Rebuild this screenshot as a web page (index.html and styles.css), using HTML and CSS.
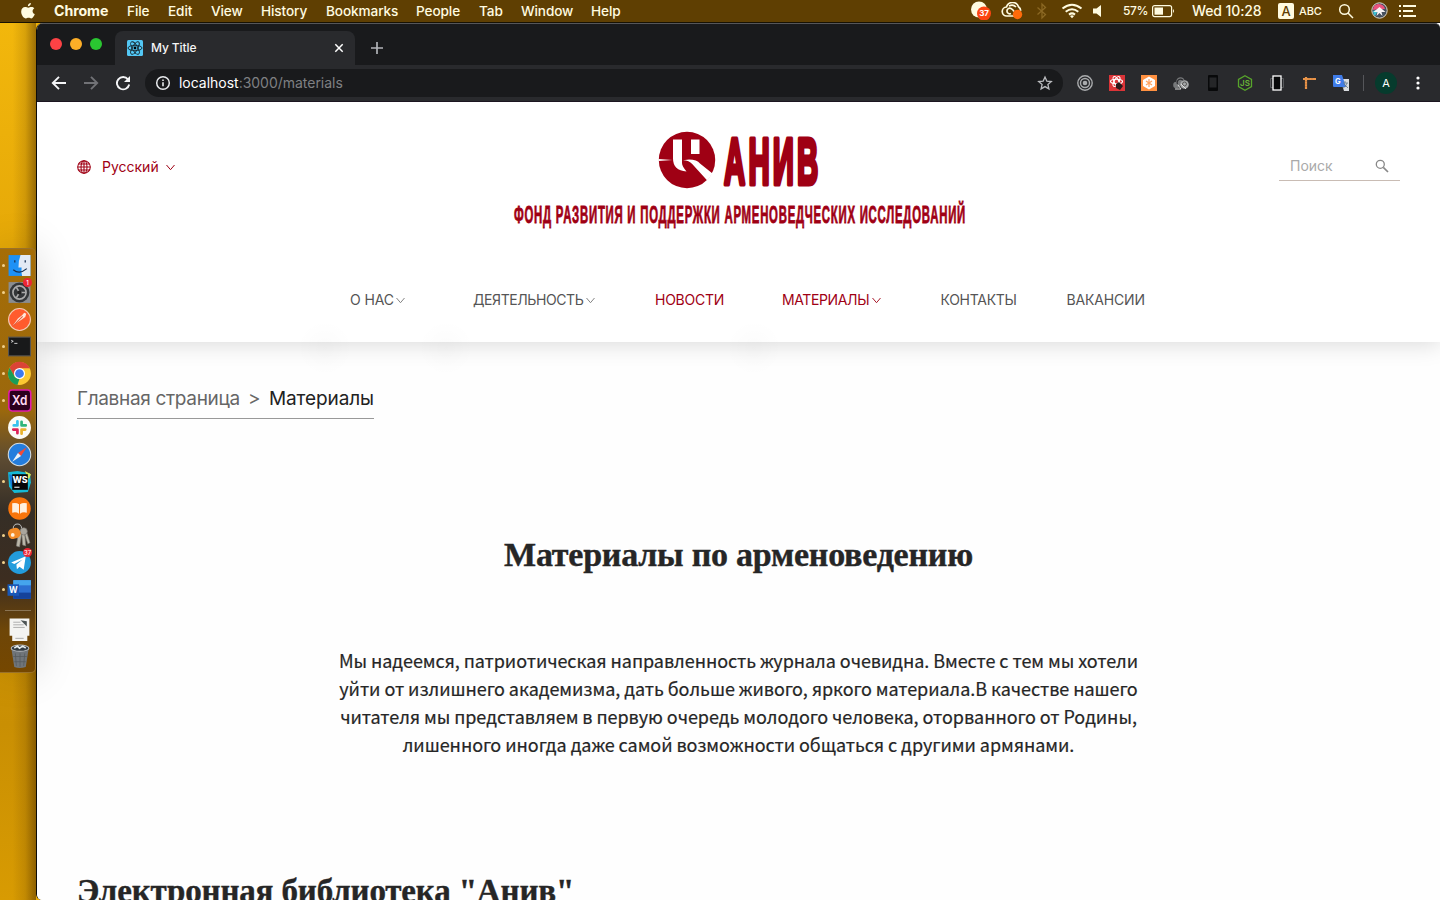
FILE: index.html
```html
<!DOCTYPE html>
<html lang="ru">
<head>
<meta charset="utf-8">
<title>My Title</title>
<link rel="stylesheet" href="styles.css">
</head>
<body>
<div class="desktop">
  <div class="menubar">
    <svg class="apple" width="16" height="18" viewBox="0 0 16 18"><path fill="#fffbe0" d="M10.9 1c.1 1.600-1.300 3.200-3 3.200C7.700 2.600 9.200 1.200 10.900 1zM14.300 6.200c-2.500 1.500-2.100 4.900.5 5.900-.6 1.900-2 4.300-3.500 4.300-1 0-1.500-.6-2.700-.6s-1.800.6-2.700.6C3.700 16.400 1 12.600 1.200 9.400 1.300 6.700 3 5 5.100 5c1.300 0 2.200.7 3.200.7S10.200 5 11.500 5c1.100 0 2.100.5 2.800 1.200z"/></svg>
    <b>Chrome</b><span>File</span><span>Edit</span><span>View</span><span>History</span><span>Bookmarks</span><span>People</span><span>Tab</span><span>Window</span><span>Help</span>
    <svg width="21" height="19" viewBox="0 0 21 19"><circle cx="8" cy="8.500" r="8" fill="#fffbe0"/><circle cx="13" cy="12.500" r="7" fill="#fc4512"/><text x="13" y="15.300" text-anchor="middle" font-size="8" font-weight="700" fill="#fff">37</text></svg>
    <svg width="22" height="18" viewBox="0 0 22 18"><g fill="none" stroke="#fffbe0" stroke-width="1.700"><path d="M14 14H6a4.500 4.500 0 0 1-.5-9 6.300 6.300 0 0 1 12-.2 5 5 0 0 1 2.200 4"/><path d="M10 11.500a2.800 2.800 0 1 1 0-5q2 1 3 3M8 4q4-2 7 1"/></g><circle cx="16.500" cy="12.500" r="4.700" fill="#ff6a0a"/></svg>
    <svg width="12" height="18" viewBox="0 0 12 18"><path d="M1.500 5.500l8 7L6 16V2l3.500 3.500-8 7" fill="none" stroke="#8b6823" stroke-width="1.300"/></svg>
    <svg width="22" height="16" viewBox="0 0 22 16"><g fill="none" stroke="#fffbe0" stroke-width="2"><path d="M1.500 5.500q9.500-7.500 19 0M4.700 8.700q6.300-5 12.600 0M8 11.600q3-2.400 6 0"/></g><path d="M9 13q2-1.500 4 0l-2 2.200z" fill="#fffbe0"/></svg>
    <svg width="12" height="14" viewBox="0 0 12 14"><path d="M1 4.500h3.500L9 1v12L4.500 9.500H1z" fill="#fffbe0"/></svg>
    <span class="pct">57%</span>
    <svg width="24" height="14" viewBox="0 0 24 14"><rect x=".6" y="1.600" width="19" height="11" rx="2" fill="none" stroke="#fffbe0" stroke-width="1.200"/><rect x="2.500" y="3.500" width="8.500" height="7.200" fill="#fffbe0"/><path d="M21 5q2 2 0 4z" fill="#fffbe0"/></svg>
    <span class="clock">Wed 10:28</span>
    <i class="layout">A</i><span class="abc">ABC</span>
    <svg width="16" height="16" viewBox="0 0 16 16"><g fill="none" stroke="#fffbe0" stroke-width="1.500"><circle cx="6.500" cy="6.500" r="4.800"/><path d="M10 10l5 5"/></g></svg>
    <svg width="17" height="17" viewBox="0 0 17 17"><circle cx="8.500" cy="8.500" r="7.700" fill="#46505e" stroke="#ded7ca"/><path d="M2 8Q2 3 7 2q6 0 7 5L9 7z" fill="#eb527c"/><path d="M2 9l6-2-4 7q-2-2-2-5z" fill="#3ec1d4"/><path d="M8.500 5l6 5q-3 0-4 0l1 4-3-3-3 3 1-4-4 0z" fill="#f6f3f5"/></svg>
    <svg width="20" height="14" viewBox="0 0 20 14"><path d="M1 2h2M5 2h13M1 7h2M5 7h10M1 12h2M5 12h13" stroke="#fffbe0" stroke-width="2"/></svg>
  </div>

  <div class="workspace">
    <aside class="side">
      <div class="dock">
        <div class="app run"><svg viewBox="0 0 24 24"><rect x="1.500" y="2" width="21" height="20" fill="#1e91f5"/><path d="M13 2h9.500v20h-8q-1-4-.5-8h-3q0-7 2-12z" fill="#e3eaf4"/><path d="M6 16q6 5 13-1" fill="none" stroke="#173154" stroke-width="1.200"/><path d="M7.500 7v2M17.500 7v2" stroke="#173154" stroke-width="1.200"/></svg></div>
        <div class="app run"><svg viewBox="0 0 24 24"><rect x="1.500" y="2" width="21" height="20" fill="#8a8d90"/><circle cx="12" cy="12" r="9.500" fill="#333638"/><circle cx="12" cy="12" r="6.300" fill="none" stroke="#aaa" stroke-width="1.600"/><path d="M12 12h6M12 12l-3-5M12 12l-3 5" stroke="#aaa" stroke-width="1.500"/><circle cx="12" cy="12" r="2" fill="#222"/></svg><em>1</em></div>
        <div class="app"><svg viewBox="0 0 24 24"><circle cx="12" cy="12" r="10.500" fill="#ff5b2d" stroke="#f3cdb6"/><path d="M5.500 18l5-7 4-3 2-2.500 2 1-1 3-4 3-3 2z" fill="#ffe6d9"/><path d="M6 18l9-9" stroke="#df5a38"/></svg></div>
        <div class="app run"><svg viewBox="0 0 24 24"><rect x="1.500" y="3" width="21" height="18" fill="#18191a" stroke="#555"/><path d="M4 6l2 1-2 1M7 9h3" fill="none" stroke="#eee" stroke-width=".8"/></svg></div>
        <div class="app run"><svg viewBox="0 0 24 24"><circle cx="12" cy="12" r="11" fill="#fbc932"/><path d="M2.500 6.500a11 11 0 0 1 19.500 0.500H12L7 14.500z" fill="#db4436"/><path d="M2.500 6.500L7.500 15l4.500 2-2 6A11 11 0 0 1 2.500 6.500z" fill="#199d58"/><circle cx="12" cy="12" r="5.300" fill="#fff"/><circle cx="12" cy="12" r="4.200" fill="#3d7af0"/></svg></div>
        <div class="app run"><svg viewBox="0 0 24 24"><rect x="1.800" y="2" width="21" height="20" rx="3" fill="#2b001d" stroke="#e31bab" stroke-width="1.500"/><text x="4.700" y="16.500" font-size="13" font-weight="600" textLength="15" lengthAdjust="spacingAndGlyphs" fill="#ffd9f3">Xd</text></svg></div>
        <div class="app"><svg viewBox="0 0 24 24"><circle cx="12" cy="12" r="11" fill="#fbfbf7"/><g stroke-width="2.600" stroke-linecap="round"><path d="M10 6v4M6.500 10H10" stroke="#38c2ee"/><path d="M14 6.500V10M14 10h4" stroke="#2fb67c"/><path d="M14 14v4M14 14h3.500" stroke="#e9b32e"/><path d="M10 14v3.500M6 14h4" stroke="#dd2258"/></g></svg></div>
        <div class="app"><svg viewBox="0 0 24 24"><circle cx="12" cy="12" r="10.800" fill="#247ddd" stroke="#d5dde2"/><path d="M19 5l-5.500 8.500-3-3z" fill="#f34b38"/><path d="M5 19l5.500-8.500 3 3z" fill="#eef3f8"/></svg></div>
        <div class="app run"><svg viewBox="0 0 24 24"><path d="M1 3l9-1 12 2 1 9-3 9-13 1-5-6z" fill="#16b9d5"/><path d="M17 2l6 3-2 5z" fill="#d7e75a"/><path d="M2 5l7 2-5 11z" fill="#1577d7"/><rect x="5" y="5" width="15" height="15" fill="#060606"/><text x="12.500" y="13" text-anchor="middle" font-size="8.500" font-weight="800" fill="#fff">WS</text><path d="M7 17.500h5" stroke="#fff"/></svg></div>
        <div class="app"><svg viewBox="0 0 24 24"><circle cx="12" cy="12" r="10.800" fill="#f9750b"/><path d="M5 7q4-1 6.500 1v9Q9 15 5 16zM19 7q-4-1-6.500 1v9q2.500-2 6.500-1z" fill="#fff0df"/></svg></div>
        <div class="app run"><svg viewBox="0 0 24 24"><circle cx="10" cy="5" r="4" fill="none" stroke="#bbb"/><path d="M11 9l-2 13 3 1 2-12M14 8l1 13 3 1-1-12M16 8l4 12 2-1-3-10" fill="#bcb7a9" stroke="#797873" stroke-width=".6"/><circle cx="16" cy="8" r="3.500" fill="#aaa69d" stroke="#6f6c67" stroke-width=".6"/><rect x="1" y="5" width="12" height="10" rx="4.500" fill="#f28b26" transform="rotate(-15 7 10)"/><circle cx="5.500" cy="11.500" r="1.800" fill="#fff3df"/></svg></div>
        <div class="app run"><svg viewBox="0 0 24 24"><circle cx="12" cy="12" r="11" fill="#239cdc"/><path d="M4 12l14-6-2 13-4-3-2.500 2.500L9 14l6-5-8 4.500z" fill="#fff"/></svg><em>37</em></div>
        <div class="app run"><svg viewBox="0 0 24 24"><rect x="6" y="3" width="17" height="18" rx="1" fill="#2c6fd1"/><path d="M6 3h17v5H6z" fill="#45a5ed"/><path d="M6 15h17v6H6z" fill="#15429a"/><rect x=".5" y="7" width="11" height="11" fill="#1957b6"/><text x="6" y="15.500" text-anchor="middle" font-size="8" font-weight="700" fill="#fff">W</text></svg></div>
        <hr>
        <div class="app"><svg viewBox="0 0 24 24"><path d="M2.500 1.500h19V18h-2v5H5v-5H2.500z" fill="#f4f4f2"/><path d="M6 5h7M6 7.500h10M6 10h11M8 20.500h8" stroke="#aaa" stroke-width=".9"/><path d="M13 3l6 1v5z" fill="#4e5555"/></svg></div>
        <div class="app"><svg viewBox="0 0 24 24"><path d="M4 3h17l-3 19q-6 2-11 0z" fill="#70757a"/><ellipse cx="12.500" cy="4" rx="8.500" ry="3" fill="#323b42" stroke="#babdc0"/><path d="M7 4l3-2 2 2 3-2 3 2" stroke="#e8efef" stroke-width="1.500" fill="none"/><path d="M8 9l1 12M12.500 9v13M17 9l-1 12M6 12h13M7 17h11" stroke="#54595d" stroke-width=".7"/></svg></div>
      </div>
    </aside>

    <main class="window">
      <div class="tabs">
        <div class="lights"><i></i><i></i><i></i></div>
        <div class="tab">
          <svg width="16" height="16" viewBox="0 0 16 16"><rect width="16" height="16" rx="1.500" fill="#53c8f5"/><g fill="none" stroke="#16252d" stroke-width=".9"><ellipse cx="8" cy="8" rx="7" ry="2.700"/><ellipse cx="8" cy="8" rx="7" ry="2.700" transform="rotate(60 8 8)"/><ellipse cx="8" cy="8" rx="7" ry="2.700" transform="rotate(120 8 8)"/></g><circle cx="8" cy="8" r="1.400"/></svg>
          <span>My Title</span>
          <svg width="10" height="10" viewBox="0 0 10 10"><path d="M1.300 1.300l7.400 7.400M8.700 1.300L1.300 8.700" stroke="#fff" stroke-width="1.500"/></svg>
        </div>
        <svg class="plus" width="12" height="12" viewBox="0 0 12 12"><path d="M6 0v12M0 6h12" stroke="#b2b4b8" stroke-width="1.700"/></svg>
      </div>
      <div class="toolbar">
        <svg width="16" height="16" viewBox="0 0 16 16"><path d="M15 8H2M8 1.800L1.800 8 8 14.200" fill="none" stroke="#f4f5f7" stroke-width="1.900"/></svg>
        <svg width="16" height="16" viewBox="0 0 16 16"><path d="M1 8h13M8 1.800L14.200 8 8 14.200" fill="none" stroke="#717276" stroke-width="1.900"/></svg>
        <svg width="16" height="16" viewBox="0 0 16 16"><path d="M13 4.300A6.200 6.200 0 1 0 14.200 9.500" fill="none" stroke="#f4f5f7" stroke-width="1.900"/><path d="M15 1v6H9z" fill="#f4f5f7"/></svg>
        <div class="omnibox">
          <svg width="16" height="16" viewBox="0 0 16 16"><circle cx="8" cy="8" r="6.300" fill="none" stroke="#e8eaed" stroke-width="1.500"/><path d="M8 7.200v4M8 4.500v1.600" stroke="#e8eaed" stroke-width="1.600"/></svg>
          <p>localhost<span>:3000/materials</span></p>
          <svg width="16" height="16" viewBox="0 0 16 16"><path d="M8 2l1.800 4.100 4.500.4-3.400 3 1 4.400L8 11.600l-3.900 2.300 1-4.400-3.400-3 4.500-.4z" fill="none" stroke="#b9babd" stroke-width="1.300"/></svg>
        </div>
        <div class="ext">
          <svg viewBox="0 0 16 16"><g fill="none" stroke="#a9abad" stroke-width="1.400"><circle cx="8" cy="8" r="7.200"/><circle cx="8" cy="8" r="4.500"/></g><circle cx="8" cy="8" r="2.300" fill="#a9abad"/></svg>
          <svg viewBox="0 0 16 16"><rect width="16" height="16" fill="#db3438"/><g fill="none" stroke="#fff" stroke-width="1.100"><ellipse cx="7.500" cy="6.500" rx="6" ry="2.300"/><ellipse cx="7.500" cy="6.500" rx="5.500" ry="2.300" transform="rotate(60 7.500 6.500)"/><ellipse cx="7.500" cy="6.500" rx="5.500" ry="2.300" transform="rotate(120 7.500 6.500)"/></g><path d="M7 9l3-2 4 4-3 4-4-2z" fill="#29191b"/></svg>
          <svg viewBox="0 0 16 16"><rect width="16" height="16" fill="#ff9141"/><path d="M8 1.500L14 5v6l-6 3.500L2 11V5z" fill="#fff"/><path d="M8 4v8M5 6l6 4M11 6l-6 4" fill="none" stroke="#ffa25f" stroke-width="1.200"/></svg>
          <svg viewBox="0 0 16 16"><g fill="#77797b"><circle cx="3.500" cy="10" r="3.300"/><circle cx="7.500" cy="6.500" r="4.200"/></g><path d="M4.500 9a3.200 3.200 0 0 1 6-3" stroke="#292a2d" stroke-width="1.200" fill="none"/><circle cx="11.500" cy="9.500" r="4.300" fill="#a7a9aa"/><circle cx="11.500" cy="9" r="2" fill="none" stroke="#555"/><path d="M5 10l3 4h-6M8 9l5 5" stroke="#ddd" fill="none"/></svg>
          <svg viewBox="0 0 16 16"><rect x="3" width="10" height="16" rx="1" fill="#08090a"/><rect x="4.500" y="2.500" width="7" height="10" fill="#252628"/></svg>
          <svg viewBox="0 0 16 16"><path d="M8 .8l6.500 3.600v7.200L8 15.200l-6.500-3.600V4.400z" fill="none" stroke="#57a52b" stroke-width="1.300"/><text x="8" y="11" text-anchor="middle" font-size="8" font-weight="600" fill="#69b437">JS</text></svg>
          <svg viewBox="0 0 16 16"><path d="M1.500 3.500h13v9h-13z" fill="none" stroke="#56585b"/><rect x="4" y="1" width="8" height="14" fill="#08090a" stroke="#fff" stroke-width="1.300"/></svg>
          <svg viewBox="0 0 16 16"><path d="M5 2v12M2 4h13" stroke="#e99448" stroke-width="2.200"/><path d="M4 6.500h2M4 9h2M4 11.500h2M8 3v1.500M11 3v1.500" stroke="#b8713c" stroke-width=".6"/></svg>
          <svg viewBox="0 0 16 16"><path d="M7 4h9v12h-5z" fill="#d9dce0"/><path d="M0 0h9l4 12H1q-1 0-1-1z" fill="#3f7ce9"/><text x="4.700" y="9" text-anchor="middle" font-size="7.500" font-weight="700" fill="#fff">G</text><path d="M10 8h5M12 6v2M14 8q-1 4-4 5M11 9l4 4" stroke="#647989" stroke-width=".8" fill="none"/></svg>
        </div>
        <span class="avatar">A</span>
        <svg class="dots" width="4" height="16" viewBox="0 0 4 16"><g fill="#fff"><circle cx="2" cy="3" r="1.600"/><circle cx="2" cy="8" r="1.600"/><circle cx="2" cy="13" r="1.600"/></g></svg>
      </div>

      <div class="page">
        <header class="header">
          <div class="top">
            <div class="lang">
              <svg width="14" height="14" viewBox="0 0 14 14"><g fill="none" stroke="#9f0014" stroke-width="1.100"><circle cx="7" cy="7" r="6.300"/><ellipse cx="7" cy="7" rx="3" ry="6.300"/><path d="M7 .7v12.600M.7 7h12.600M1.500 4h11M1.500 10h11"/></g></svg>
              <span>Русский</span>
              <svg width="9" height="7" viewBox="0 0 9 7"><path d="M.5 1l4 4.700 4-4.700" fill="none" stroke="#9f0014"/></svg>
            </div>
            <svg class="logo" width="454" height="100" viewBox="0 0 454 100">
              <circle cx="175" cy="32" r="28.200" fill="#9f0014"/>
              <g fill="#fff"><path d="M161 11.500h9V35q0 3 4.500 8.500-13.500-1-13.500-13z"/><path d="M179 11.500h8.500V26H179z"/><path d="M146.500 31l14 1-14 1z"/><path d="M171 32.200l6-.7q8 0 11 4l12.500 10-5.300 7-15-16.500q-3-3.500-9.200-3.800z"/></g>
              <text class="name" x="212" y="55.500" textLength="97.500" lengthAdjust="spacingAndGlyphs">АНИВ</text>
              <text class="motto" x="2" y="94.500" textLength="452" lengthAdjust="spacingAndGlyphs">ФОНД РАЗВИТИЯ И ПОДДЕРЖКИ АРМЕНОВЕДЧЕСКИХ ИССЛЕДОВАНИЙ</text>
            </svg>
            <div class="search">
              <span>Поиск</span>
              <svg width="14" height="14" viewBox="0 0 14 14"><g fill="none" stroke="#888" stroke-width="1.300"><circle cx="5.300" cy="5.300" r="4"/><path d="M8.300 8.300l4.700 4.700" stroke-width="1.700"/></g></svg>
            </div>
          </div>
          <nav class="nav">
            <a class="n1">О НАС<svg viewBox="0 0 9 7"><path d="M.5 1l4 4.700 4-4.700"/></svg></a>
            <a class="n2">ДЕЯТЕЛЬНОСТЬ<svg viewBox="0 0 9 7"><path d="M.5 1l4 4.700 4-4.700"/></svg></a>
            <a class="n3 on">НОВОСТИ</a>
            <a class="n4 on">МАТЕРИАЛЫ<svg viewBox="0 0 9 7"><path d="M.5 1l4 4.700 4-4.700"/></svg></a>
            <a class="n5">КОНТАКТЫ</a>
            <a class="n6">ВАКАНСИИ</a>
          </nav>
        </header>
        <div class="crumbs"><span class="c1">Главная страница</span><span class="gt">&gt;</span><span class="c2">Материалы</span></div>
        <h1>Материалы по арменоведению</h1>
        <p class="intro">Мы надеемся, патриотическая направленность журнала очевидна. Вместе с тем мы хотели<br>уйти от излишнего академизма, дать больше живого, яркого материала.В качестве нашего<br>читателя мы представляем в первую очередь молодого человека, оторванного от Родины,<br>лишенного иногда даже самой возможности общаться с другими армянами.</p>
        <h2>Электронная библиотека "Анив"</h2>
      </div>
    </main>
  </div>
</div>
</body>
</html>
```
FILE: styles.css
```css
* { box-sizing: border-box; }
body { margin: 0; font-family: Inter, "Liberation Sans", sans-serif; }
svg { display: block; flex: none; }
.desktop { width: 1440px; height: 900px; overflow: hidden; display: flex; flex-direction: column; background: #eeb007; }
.menubar {
  height: 23px; flex: none; display: grid; align-items: center; justify-items: start;
  grid-template-columns: 34px 73px 41px 43px 50px 65px 90px 63px 42px 70px 380px 30px 35px 25px 31px 31px 29px 40px 86px 21px 39px 33px 27px 22px;
  padding: 0 0 1px 20px; background: #5f3f02; border-bottom: 1px solid #181202;
  color: #fffbe0; font-size: 13.600px; font-weight: 500; letter-spacing: -.1px; white-space: nowrap;
}
.menubar b { font-weight: 700; font-size: 14.200px; }
.pct { font-size: 12px; letter-spacing: -.4px; }
.clock { font-size: 14px; }
.abc { font-size: 11px; }
.layout { width: 16px; height: 16px; border-radius: 2px; background: #fffbe0; color: #5f3f02; text-align: center; font: 500 13px/16px Inter; }

.workspace { display: flex; flex: 1; min-height: 0; }
.side { position: relative; z-index: 2; width: 36px; flex: none; padding-top: 225px; background: linear-gradient(90deg, transparent 35%, rgba(70,40,0,.15) 70%, rgba(70,40,0,.5)), linear-gradient(#f2b70c, #e6a908 25%, #c98f03 80%, #d89b02); }
.dock { height: 425px; padding: 3px 0 0 7px; border: 1px solid #99712a; border-left: 0; border-radius: 0 5px 5px 0; box-shadow: 0 0 40px rgba(0,0,0,.15); background: linear-gradient(#a56d07, #9b680c 38%, #5b4a32 50%, #352e26 62%, #3c2d20 78%, #6e4608 90%, #754700); }
.app { position: relative; width: 25px; height: 27px; padding: .5px 0; }
.app svg { width: 25px; height: 25px; }
.app.run::before { content: ""; position: absolute; left: -5px; top: 12px; width: 3px; height: 3px; border-radius: 50%; background: #f1d08b; }
.app em { position: absolute; right: 0; top: -1px; width: 9px; height: 9px; border-radius: 50%; background: #eb2634; color: #fff; font: 500 6px/9px Inter; text-align: center; }
.dock hr { width: 26px; height: 1px; margin: 7px 0 5px -2px; border: 0; background: #8b7453; }

.window { flex: 1; min-width: 0; display: flex; flex-direction: column; overflow: hidden; border-left: 1px solid #0c0b08; border-radius: 7px 0 0 6px; background: #fff; }
.tabs { height: 42px; flex: none; display: flex; align-items: flex-end; background: #191a1c; border-top: 1px solid #55565a; border-top-right-radius: 5px; }
.lights { display: flex; gap: 8px; padding: 0 13px 15px 13px; }
.lights i { width: 12px; height: 12px; border-radius: 50%; background: #fc4245; }
.lights i:nth-child(2) { background: #fdae27; }
.lights i:nth-child(3) { background: #2ac631; }
.tab { width: 240px; height: 34px; display: flex; align-items: center; gap: 8px; padding: 0 11px 0 12px; border-radius: 8px 8px 0 0; background: #292a2d; color: #f5f5f6; font-size: 12px; }
.tab span { flex: 1; padding-bottom: 1px; font-weight: 500; letter-spacing: -.1px; }
.plus { margin: 0 0 11px 16px; }
.toolbar { height: 37px; flex: none; display: flex; align-items: center; gap: 16px; padding: 0 20px 0 14px; background: #292a2d; border-bottom: 1px solid #1c1520; }
.omnibox { width: 918px; height: 28px; display: flex; align-items: center; gap: 8px; padding: 0 10px; border-radius: 14px; background: #191a1c; margin-left: -2px; }
.omnibox p { flex: 1; margin: 0; padding-bottom: 1px; font-size: 14px; color: #fff; letter-spacing: -.02px; }
.omnibox p span { color: #7f8083; }
.ext { display: flex; gap: 16px; margin-left: -2px; padding-right: 14px; border-right: 1px solid #55565a; }
.ext svg { width: 16px; height: 16px; }
.avatar { width: 22px; height: 22px; border-radius: 50%; background: #063b2d; color: #fff; text-align: center; font-size: 11px; line-height: 22px; margin-left: -5px; }
.dots { margin-left: 3px; }

.page { flex: 1; min-height: 0; overflow: hidden; color: #262626; background: #fefefe; }
.header { position: relative; height: 240px; background: #fff; box-shadow: 0 2px 22px rgba(0,0,0,.15); }
/* faint halos under the menu items that open a submenu */
.header::after { content: ""; position: absolute; inset: 215px 0 -40px; pointer-events: none; background: radial-gradient(circle 28px at 288px 31px, rgba(0,0,0,.015), transparent), radial-gradient(circle 28px at 409px 31px, rgba(0,0,0,.015), transparent), radial-gradient(circle 28px at 717px 31px, rgba(0,0,0,.015), transparent); }
.top { height: 176px; display: flex; justify-content: space-between; align-items: flex-start; padding: 26px 40px 0; }
.lang { width: 202px; display: flex; align-items: center; padding-top: 30px; color: #9f0014; font-size: 14px; }
.lang span { margin: 0 7.500px 0 11px; line-height: 18px; }
.logo { margin-left: 38px; overflow: visible; }
.name { font: 700 65px "Liberation Sans"; letter-spacing: 7px; fill: #9f0014; stroke: #9f0014; stroke-width: 5px; stroke-linejoin: round; }
.motto { font: 700 23px "Liberation Sans"; letter-spacing: 1.500px; fill: #9f0014; stroke: #9f0014; stroke-width: .8px; }
.search { width: 121px; height: 27px; margin: 26px 0 0 119px; display: flex; justify-content: space-between; padding: 3px 11px 0; border-bottom: 1px solid #c9bcb4; color: #aaa; font-size: 14px; line-height: 18px; }
.search svg { margin-top: 2px; }
.nav { display: grid; grid-template-columns: 123px 182px 127px 158.500px 126px auto; padding: 13px 0 0 313px; color: #555; font-size: 14px; line-height: 18px; }
.nav a { display: flex; align-items: center; white-space: nowrap; }
.nav svg { width: 9px; height: 7px; margin-left: 2px; fill: none; stroke: #777; stroke-width: .9; }
.n1 { letter-spacing: -.1px; }
.n2 { letter-spacing: -.42px; }
.n3 { letter-spacing: -.25px; }
.n4 { letter-spacing: -.38px; }
.n5 { letter-spacing: -.28px; }
.n6 { letter-spacing: -.15px; }
.nav .n2 svg, .nav .n4 svg { margin-left: 3px; }
.on { color: #9f0014; }
.nav .on svg { stroke: #9f0014; }
.crumbs { width: 297px; height: 37px; margin: 40px 0 0 40px; display: flex; justify-content: space-between; border-bottom: 1px solid #999; color: #666; font-size: 19px; line-height: 34px; white-space: nowrap; }
.c1 { letter-spacing: -.33px; }
.c2 { color: #222; letter-spacing: -.1px; }
h1, h2 { margin: 0; font: 700 34px/44px "Liberation Serif", serif; white-space: nowrap; -webkit-text-stroke: .4px #262626; }
h1 { margin-top: 114px; text-align: center; letter-spacing: -.23px; }
.intro { margin: 69px 0 0; text-align: center; font: 400 18px/28px "Noto Sans CJK SC", sans-serif; letter-spacing: -.05px; white-space: nowrap; -webkit-text-stroke: .2px #262626; }
h2 { margin: 111px 0 0 40px; font-size: 33px; letter-spacing: -.15px; }
```
